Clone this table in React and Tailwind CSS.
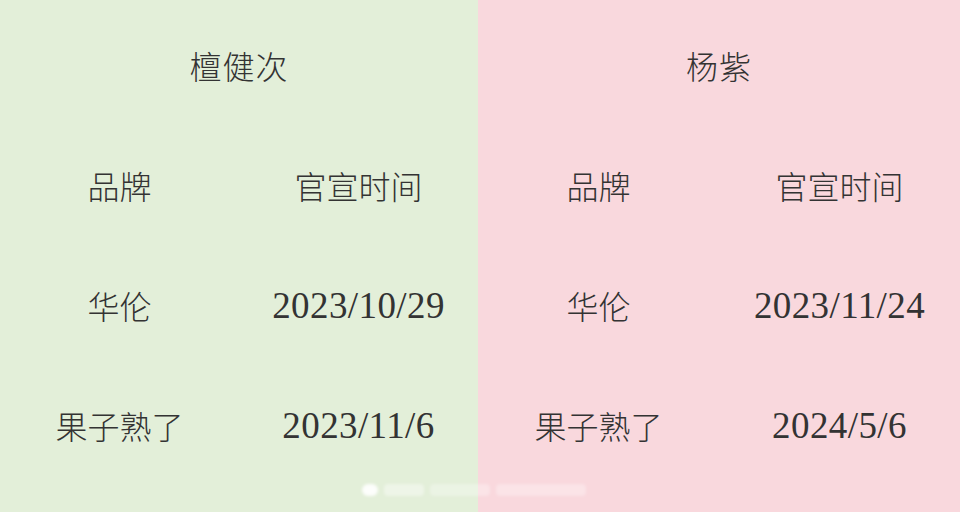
import React from "react";

const cjk = { fontFamily: '"Noto Sans CJK SC", "Liberation Serif", serif' };
const num = { fontFamily: '"Liberation Serif", "Noto Sans CJK SC", serif' };

const Half = ({ name, rows, bg }) => (
  <div className={`h-full flex flex-col pt-[5px] ${bg}`}>
    <div className="h-[120px] flex items-center justify-center">
      <span style={cjk} className="text-[32px] font-light text-[#333] tracking-[1px]">
        {name}
      </span>
    </div>
    <div className="grid grid-cols-2">
      <div className="h-[120px] flex items-center justify-center">
        <span style={cjk} className="text-[32px] font-light text-[#333]">品牌</span>
      </div>
      <div className="h-[120px] flex items-center justify-center">
        <span style={cjk} className="text-[32px] font-light text-[#333]">官宣时间</span>
      </div>
      {rows.map(([brand, date]) => (
        <React.Fragment key={brand}>
          <div className="h-[120px] flex items-center justify-center">
            <span style={cjk} className="text-[32px] font-light text-[#333]">{brand}</span>
          </div>
          <div className="h-[120px] flex items-center justify-center pt-[2px]">
            <span style={num} className="text-[37px] text-[#333] tracking-[0.4px]">{date}</span>
          </div>
        </React.Fragment>
      ))}
    </div>
  </div>
);

export default function App() {
  return (
    <div className="relative w-[960px] h-[512px] overflow-hidden grid grid-cols-[478px_482px]">
      <Half
        name="檀健次"
        bg="bg-[#e3efd9]"
        rows={[
          ["华伦", "2023/10/29"],
          ["果子熟了", "2023/11/6"],
        ]}
      />
      <Half
        name="杨紫"
        bg="bg-[#f9d8dd]"
        rows={[
          ["华伦", "2023/11/24"],
          ["果子熟了", "2024/5/6"],
        ]}
      />
      {/* blurred watermark */}
      <div className="absolute left-[362px] top-[484px] flex items-center gap-[6px] blur-[1.5px]">
        <div className="w-[16px] h-[12px] rounded-full bg-white opacity-90" />
        <div className="w-[40px] h-[12px] rounded-sm bg-white opacity-40" />
        <div className="w-[60px] h-[12px] rounded-sm bg-white opacity-30" />
        <div className="w-[90px] h-[12px] rounded-sm bg-white opacity-30" />
      </div>
    </div>
  );
}
